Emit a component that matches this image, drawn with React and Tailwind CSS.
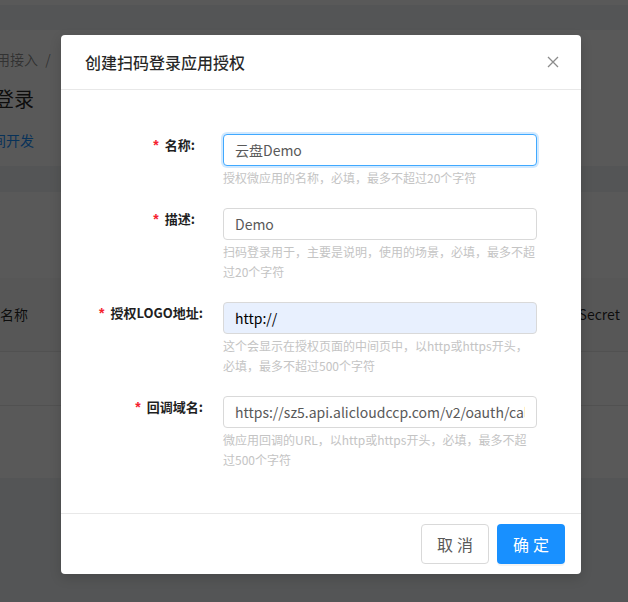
import React from 'react';

const fields = [
  {
    label: '名称',
    value: '云盘Demo',
    help: '授权微应用的名称，必填，最多不超过20个字符',
    focused: true,
    labelPad: 'pr-[28px]',
  },
  {
    label: '描述',
    value: 'Demo',
    help: '扫码登录用于，主要是说明，使用的场景，必填，最多不超过20个字符',
    labelPad: 'pr-[28px]',
  },
  {
    label: '授权LOGO地址',
    value: 'http://',
    help: '这个会显示在授权页面的中间页中，以http或https开头，必填，最多不超过500个字符',
    autofill: true,
    labelPad: 'pr-[20px]',
  },
  {
    label: '回调域名',
    value: 'https://sz5.api.alicloudccp.com/v2/oauth/callback',
    help: '微应用回调的URL，以http或https开头，必填，最多不超过500个字符',
    labelPad: 'pr-[20px]',
  },
];

function FormRow({ field }) {
  let inputClass =
    'w-full h-[32px] px-[11px] rounded-[4px] border text-[14px] outline-none text-[#595959] bg-white border-[#d9d9d9]';
  if (field.focused) {
    inputClass =
      'w-full h-[32px] px-[11px] rounded-[4px] border text-[14px] outline-none text-[#595959] bg-white border-[#40a9ff] shadow-[0_0_0_2px_rgba(24,144,255,0.2)]';
  }
  if (field.autofill) {
    inputClass =
      'w-full h-[32px] px-[11px] rounded-[4px] border text-[14px] outline-none text-black bg-[#e8f0fe] border-[#d9d9d9]';
  }

  return (
    <div className="flex">
      <div
        className={`w-[138px] shrink-0 ${field.labelPad} text-right leading-[22px] text-[13px] font-bold text-[#1f1f1f] whitespace-nowrap`}
      >
        <span className="text-[#f5222d] font-bold text-[14px] mr-[6px] font-['Liberation_Sans',sans-serif]">*</span>
        {field.label}
        <span>:</span>
      </div>
      <div className="w-[314px]">
        <input readOnly value={field.value} className={inputClass} />
        <div className="mt-[2px] text-[12px] leading-[20px] text-[#c4c4c4]">{field.help}</div>
      </div>
    </div>
  );
}

function BackgroundPage() {
  return (
    <div className="flex flex-col">
      <div className="h-[5px] bg-white"></div>
      <div className="h-[25px]"></div>
      <div className="h-[136px] bg-white flex flex-col pt-[18px]">
        <div className="ml-[-4px] text-[14px] leading-[22px] text-black/45 whitespace-nowrap">
          用接入 <span className="ml-[4px]">/</span>
        </div>
        <div className="ml-[-6px] mt-[13px] text-[20px] leading-[32px] text-black/85">登录</div>
        <div className="ml-[-8px] mt-[14px] text-[14px] leading-[22px] text-[#1890ff]">间开发</div>
      </div>
      <div className="h-[26px]"></div>
      <div className="h-[286px] bg-white flex flex-col pt-[86px]">
        <div className="h-[74px] bg-[#fafafa] border-b border-[#e8e8e8] flex items-center justify-between text-[14px] text-black/85">
          <span>名称</span>
          <span className="mr-[8px]">Secret</span>
        </div>
        <div className="h-[54px] border-b border-[#e8e8e8]"></div>
      </div>
    </div>
  );
}

export default function App() {
  return (
    <div className="relative w-full h-[602px] overflow-hidden bg-[#f0f2f5] font-['Noto_Sans_CJK_SC',sans-serif]">
      <BackgroundPage />

      {/* mask */}
      <div className="absolute inset-0 bg-black/65"></div>

      {/* modal */}
      <div className="absolute left-[61px] top-[35px] w-[520px] bg-white rounded-[4px] shadow-[0_4px_12px_rgba(0,0,0,0.15)]">
        <div className="px-[24px] py-[16px] border-b border-[#e8e8e8] flex items-center justify-between">
          <h3 className="text-[16px] leading-[22px] font-medium text-black/85">创建扫码登录应用授权</h3>
          <button className="w-[16px] h-[16px] mr-[-4px] flex items-center justify-center text-[#8c8c8c]" aria-label="Close">
            <svg width="12" height="12" viewBox="0 0 12 12" fill="none" stroke="currentColor" strokeWidth="1.3">
              <path d="M1 1L11 11M11 1L1 11" />
            </svg>
          </button>
        </div>

        <div className="pl-[24px] pt-[44px] pb-[43px] flex flex-col gap-[20px]">
          {fields.map((f) => (
            <FormRow key={f.label} field={f} />
          ))}
        </div>

        <div className="px-[16px] py-[10px] border-t border-[#e8e8e8] flex justify-end gap-[8px]">
          <button className="w-[68px] h-[40px] rounded-[4px] border border-[#d9d9d9] bg-white text-[16px] text-[#595959] tracking-[4px] pl-[4px]">
            取消
          </button>
          <button className="w-[68px] h-[40px] rounded-[4px] bg-[#1890ff] text-[16px] text-white tracking-[4px] pl-[4px] shadow-[0_2px_0_rgba(0,0,0,0.045)]">
            确定
          </button>
        </div>
      </div>
    </div>
  );
}
